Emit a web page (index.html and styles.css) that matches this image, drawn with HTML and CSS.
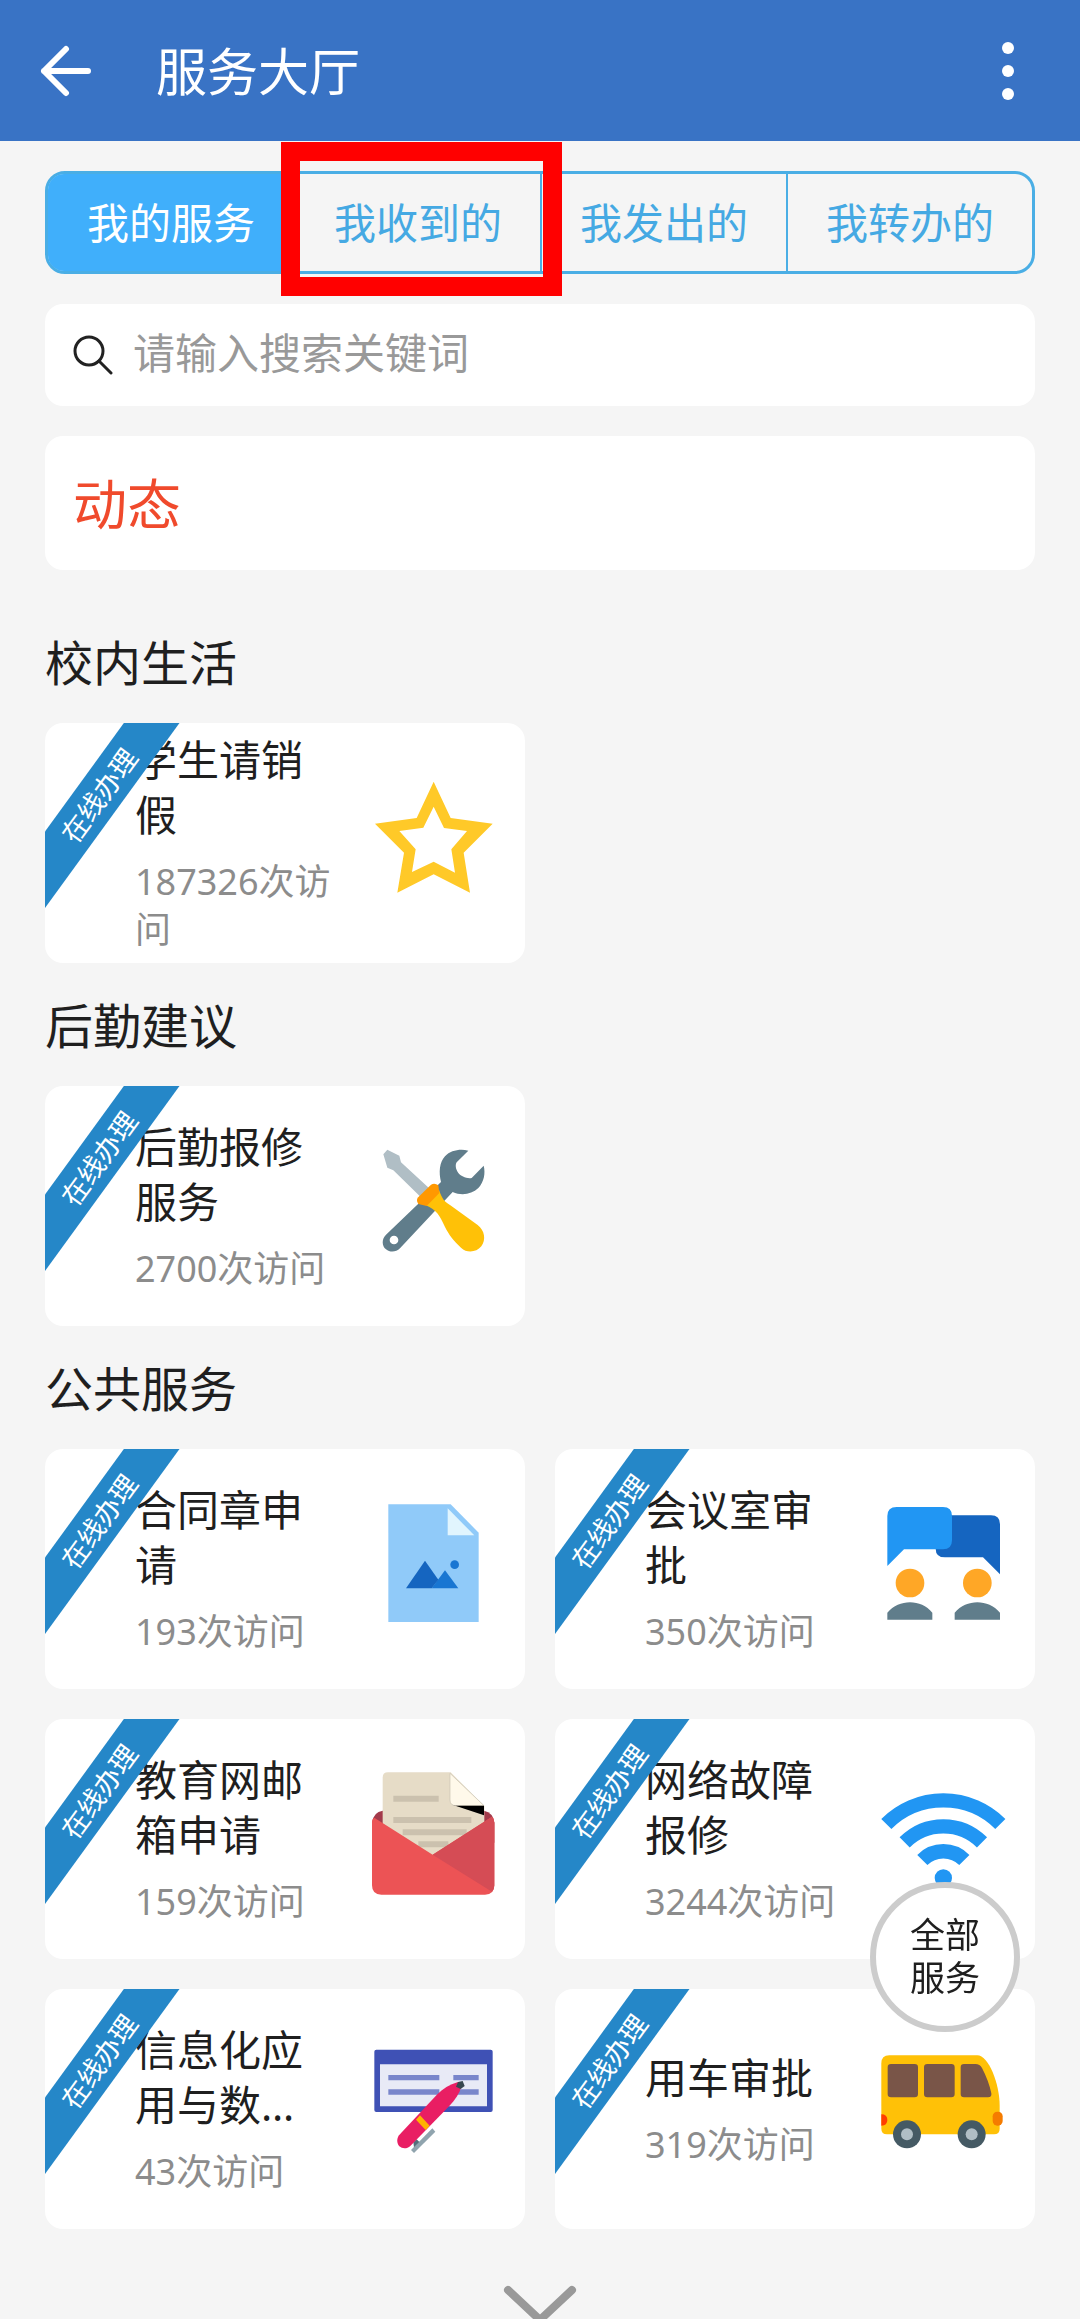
FILE: index.html
```html
<!DOCTYPE html>
<html lang="zh-CN">
<head>
<meta charset="utf-8">
<meta name="viewport" content="width=device-width, initial-scale=1">
<title>服务大厅</title>
<link rel="stylesheet" href="styles.css">
</head>
<body>
<header class="topbar">
  <button class="icon-button" type="button" aria-label="返回">
    <svg width="52" height="52" viewBox="0 0 52 52" fill="none" stroke="#fff" stroke-width="6" stroke-linecap="round" stroke-linejoin="round"><path d="M26 4 4 26l22 22M4 26h44"/></svg>
  </button>
  <h1 class="topbar-title">服务大厅</h1>
  <button class="icon-button" type="button" aria-label="更多">
    <svg width="24" height="60" viewBox="0 0 24 60" fill="#fff"><circle cx="12" cy="7" r="6"/><circle cx="12" cy="30" r="6"/><circle cx="12" cy="53" r="6"/></svg>
  </button>
</header>

<main class="content">
  <nav class="tabs">
    <button class="tab tab-active" type="button">我的服务</button>
    <button class="tab tab-marked" type="button">我收到的</button>
    <button class="tab" type="button">我发出的</button>
    <button class="tab" type="button">我转办的</button>
  </nav>

  <label class="search">
    <svg width="40" height="40" viewBox="0 0 40 40" fill="none" stroke="#222" stroke-width="3" stroke-linecap="round"><circle cx="16" cy="16" r="14"/><path d="m26 26 12 12"/></svg>
    <input class="search-input" type="search" placeholder="请输入搜索关键词" aria-label="请输入搜索关键词">
  </label>

  <section class="news"><h2 class="news-title">动态</h2></section>

  <section>
    <h2 class="section-title">校内生活</h2>
    <div class="cards">
      <a class="card" href="#leave">
        <span class="ribbon">在线办理</span>
        <span class="card-text"><span class="card-name">学生请销假</span><span class="card-count">187326次访问</span></span>
        <svg class="card-icon" viewBox="1008 212 405 405"><path fill="#ffc928" fill-rule="evenodd" d="M1211 247l51 109 126 17-87 87 19 120-109-55-109 55 20-120-87-87 125-17zM1211 322l-31 63-72 10 49 55-11 68 65-31 64 33-11-70 47-55-69-9z"/></svg>
      </a>
    </div>
  </section>

  <section>
    <h2 class="section-title">后勤建议</h2>
    <div class="cards">
      <a class="card" href="#repair">
        <span class="ribbon">在线办理</span>
        <span class="card-text"><span class="card-name">后勤报修服务</span><span class="card-count">2700次访问</span></span>
        <svg class="card-icon" viewBox="1008 190 405 405">
          <path fill="#607d8b" fill-rule="evenodd" d="M1315 243C1290 237 1262 242 1245 260C1228 279 1226 308 1233 337L1068 495C1055 508 1055 528 1068 539C1080 549 1098 548 1110 536L1268 367C1295 379 1325 374 1345 355C1362 337 1367 310 1361 288L1325 325C1310 328 1292 319 1285 310C1277 299 1275 286 1280 278ZM1092 498a13 13 0 1 1 0 26a13 13 0 0 1 0-26z"/>
          <path fill="#b0bec5" d="M1060 254L1072 240L1108 258L1113 278L1200 358L1172 382L1090 302L1072 294Z"/>
          <path fill="#ffc107" d="M1186 406L1227 360C1236 388 1244 396 1260 406L1343 466C1364 482 1369 510 1354 530C1338 549 1311 551 1293 534C1270 513 1256 494 1245 472C1228 436 1222 422 1186 406Z"/>
          <path fill="#ff9800" d="M1163 384L1203 345Q1214 338 1225 347L1228 370L1190 409L1165 403Q1158 392 1163 384Z"/>
        </svg>
      </a>
    </div>
  </section>

  <section>
    <h2 class="section-title">公共服务</h2>
    <div class="cards">
      <a class="card" href="#contract">
        <span class="ribbon">在线办理</span>
        <span class="card-text"><span class="card-name">合同章申请</span><span class="card-count">193次访问</span></span>
        <svg class="card-icon" viewBox="1008 200 405 405">
          <path fill="#90caf9" d="M1075 225H1262L1346 310V578H1075Z"/><path fill="#e1f5fe" d="M1253 237L1333 318H1253Z"/>
          <path fill="#1976d2" d="M1205 477L1245 423L1285 477Z"/><path fill="#1565c0" d="M1128 477L1185 394L1225 451L1205 477Z"/><circle cx="1274" cy="406" r="13" fill="#1976d2"/>
        </svg>
      </a>
      <a class="card" href="#meeting">
        <span class="ribbon">在线办理</span>
        <span class="card-text"><span class="card-name">会议室审批</span><span class="card-count">350次访问</span></span>
        <svg class="card-icon" viewBox="1008 200 405 405">
          <path fill="#1565c0" d="M1380 435V285Q1380 258 1353 258H1215Q1187 258 1187 285V358Q1187 384 1215 384H1329Z"/>
          <path fill="#2196f3" d="M1042 410V260Q1042 233 1070 233H1209Q1236 233 1236 260V333Q1236 360 1209 360H1092Z"/>
          <g fill="#ffa726"><circle cx="1110" cy="461" r="43"/><circle cx="1312" cy="461" r="43"/></g>
          <path fill="#607d8b" d="M1042 571V550C1060 529 1085 519 1110 519S1160 529 1177 550V571ZM1244 571V550C1262 529 1287 519 1312 519S1362 529 1380 550V571Z"/>
        </svg>
      </a>
      <a class="card" href="#mail">
        <span class="ribbon">在线办理</span>
        <span class="card-text"><span class="card-name">教育网邮箱申请</span><span class="card-count">159次访问</span></span>
        <svg class="card-icon" viewBox="1008 170 405 405">
          <path fill="#a33a4b" d="M1026 340Q1030 308 1058 304H1362Q1390 310 1393 340V400H1026Z"/>
          <path fill="#e6dcc7" d="M1058 205Q1058 189 1074 189H1262L1363 290V345L1208 440L1058 350Z"/>
          <path fill="#fff9ea" stroke="#c9c2b2" stroke-width="2" d="M1260 192L1362 289H1278Q1260 289 1260 272Z"/>
          <path fill="#000" d="M1267 286L1278 289H1362V318Z"/>
          <path stroke="#cbc1ae" stroke-width="18" d="M1090 268H1226M1090 332H1324M1118 369H1310M1165 405H1255"/>
          <path fill="#ec5355" d="M1026 340Q1026 326 1034 326L1208 436L1386 322Q1393 328 1393 340V528Q1393 556 1365 556H1054Q1026 556 1026 528Z"/>
          <path fill="#d54c55" d="M1208 436L1386 322Q1393 328 1393 340V528Q1393 540 1386 547Z"/>
        </svg>
      </a>
      <a class="card" href="#network">
        <span class="ribbon">在线办理</span>
        <span class="card-text"><span class="card-name">网络故障报修</span><span class="card-count">3244次访问</span></span>
        <svg class="card-icon" viewBox="1008 170 405 405">
          <path fill="none" stroke="#2196f3" stroke-width="43" d="M1039 344A242 242 0 0 1 1381 344M1094 399A164 164 0 0 1 1326 399M1147 452A89 89 0 0 1 1273 452"/><circle cx="1210" cy="506" r="26" fill="#2196f3"/>
        </svg>
      </a>
      <a class="card" href="#data">
        <span class="ribbon">在线办理</span>
        <span class="card-text"><span class="card-name">信息化应用与数…</span><span class="card-count">43次访问</span></span>
        <svg class="card-icon" viewBox="1008 170 405 405">
          <rect x="1033" y="211" width="355" height="187" rx="6" fill="#3f51b5"/><path fill="#e8eaf6" d="M1050 255H1371V381H1050Z"/>
          <path stroke="#7986cb" stroke-width="16" d="M1075 295H1228M1270 295H1346M1075 338H1228M1270 338H1346"/>
          <path fill="#90a4ae" d="M1143 512L1207 447L1216 457L1152 521Z"/><path fill="#546e7a" d="M1150 488L1160 480L1168 488L1152 504Z"/>
          <path fill="#e91e63" d="M1284 308C1258 316 1238 328 1222 345L1107 468C1098 480 1102 495 1108 501C1117 509 1131 509 1141 500L1258 380C1276 360 1288 343 1294 322Z"/>
          <path fill="#ffb300" d="M1158 421L1170 408L1199 439L1187 452Z"/><path fill="#37474f" d="M1284 308L1298 305L1304 320L1292 329L1278 322Z"/>
        </svg>
      </a>
      <a class="card" href="#car">
        <span class="ribbon">在线办理</span>
        <span class="card-text"><span class="card-name">用车审批</span><span class="card-count">319次访问</span></span>
        <svg class="card-icon" viewBox="1008 170 405 405">
          <path fill="#ffc107" d="M1024 252Q1024 228 1048 228H1312C1345 228 1379 312 1379 380V448Q1379 465 1362 465H1041Q1024 465 1024 448Z"/>
          <path fill="#795548" d="M1053 254H1124Q1134 254 1134 264V344Q1134 354 1124 354H1053Q1043 354 1043 344V264Q1043 254 1053 254ZM1162 254H1234Q1244 254 1244 264V344Q1244 354 1234 354H1162Q1152 354 1152 344V264Q1152 254 1162 254ZM1272 254H1306Q1320 254 1326 266Q1346 304 1354 342Q1356 354 1344 354H1272Q1262 354 1262 344V264Q1262 254 1272 254Z"/>
          <path fill="#ff3d00" d="M1024 405Q1042 405 1042 422T1024 439Z"/><rect x="1358" y="397" width="30" height="42" rx="14" fill="#f57c00"/>
          <g fill="#455a64"><circle cx="1101" cy="465" r="42"/><circle cx="1295" cy="465" r="42"/></g><g fill="#b0bec5"><circle cx="1101" cy="465" r="18"/><circle cx="1295" cy="465" r="18"/></g>
        </svg>
      </a>
    </div>
  </section>
</main>

<button class="more" type="button" aria-label="展开更多">
  <svg width="76" height="36" viewBox="0 0 76 36" fill="none" stroke="#999" stroke-width="8" stroke-linecap="round" stroke-linejoin="round"><path d="m6 6 32 30L70 6"/></svg>
</button>
<button class="all-services" type="button">全部<br>服务</button>
</body>
</html>
```
FILE: styles.css
```css
* { box-sizing: border-box; }

body {
  margin: 0;
  background: #f5f5f5;
  color: #1f1f1f;
  font-family: "Noto Sans", "Noto Sans CJK SC", sans-serif;
}

h1, h2 { margin: 0; font-weight: 400; }

button {
  margin: 0;
  padding: 0;
  border: 0;
  background: none;
  color: inherit;
  font: inherit;
  cursor: pointer;
}

svg { display: block; flex: none; }

.topbar {
  display: flex;
  align-items: center;
  height: 141px;
  padding: 0 60px 0 40px;
  background: #3973c5;
  color: #fff;
}

.topbar-title {
  flex: 1;
  padding-left: 64px;
  font-size: 51px;
  line-height: 72px;
}

.content { padding: 30px 45px 0; }

.tabs {
  display: grid;
  grid-template-columns: repeat(4, 1fr);
  height: 103px;
  border: 3px solid #4aaee5;
  border-radius: 20px;
  color: #45a9e3;
  font-size: 42px;
}

.tab {
  position: relative;
  padding-bottom: 4px;
}

.tab + .tab { border-left: 2px solid #4aaee5; }

.tab-active {
  border-radius: 16px 0 0 16px;
  background: #40affb;
  color: #fff;
}

/* highlight frame laid over the tab row */
.tab-marked::after {
  content: "";
  position: absolute;
  z-index: 1;
  inset: -32px -22px -25px -15px;
  border: 19px solid #f00;
  pointer-events: none;
}

.search {
  display: flex;
  align-items: center;
  gap: 20px;
  height: 102px;
  margin-top: 30px;
  padding: 0 28px;
  border-radius: 18px;
  background: #fff;
}

.search-input {
  flex: 1;
  min-width: 0;
  padding: 0 0 6px;
  border: 0;
  outline: 0;
  background: none;
  color: #222;
  font: inherit;
  font-size: 42px;
}

.search-input::placeholder { color: #999; opacity: 1; }

.news {
  margin: 30px 0;
  padding: 32px 28px 30px;
  border-radius: 18px;
  background: #fff;
}

.news-title {
  color: #f04a2c;
  font-size: 54px;
  line-height: 72px;
}

.section-title {
  padding: 27px 0 24px;
  font-size: 48px;
  line-height: 72px;
}

.cards {
  display: grid;
  grid-template-columns: 1fr 1fr;
  gap: 30px;
}

.card {
  position: relative;
  display: flex;
  align-items: center;
  gap: 28px;
  min-height: 240px;
  padding: 0 24px 0 90px;
  overflow: hidden;
  border-radius: 18px;
  background: #fff;
  color: inherit;
  text-decoration: none;
}

/* diagonal band across the card's corner */
.ribbon {
  position: absolute;
  z-index: 1;
  top: 50px;
  left: -76px;
  width: 260px;
  background: #2587c8;
  color: #fff;
  font-size: 27px;
  line-height: 45px;
  text-align: center;
  transform: rotate(-54deg);
}

.card-text {
  display: flex;
  flex: 1;
  flex-direction: column;
  gap: 16px;
  min-width: 0;
}

.card-name {
  font-size: 42px;
  line-height: 55px;
}

.card-count {
  color: #8c8c8c;
  font-size: 36px;
  line-height: 48px;
}

.card-icon {
  width: 135px;
  height: 135px;
  margin-bottom: 12px;
}

.more {
  display: block;
  margin: 55px auto 0;
}

.all-services {
  position: fixed;
  z-index: 2;
  right: 60px;
  bottom: 287px;
  width: 150px;
  height: 150px;
  padding-bottom: 2px;
  border: 6px solid #ccc;
  border-radius: 50%;
  background: #fffffff0;
  font-size: 35px;
  line-height: 43px;
}
```
